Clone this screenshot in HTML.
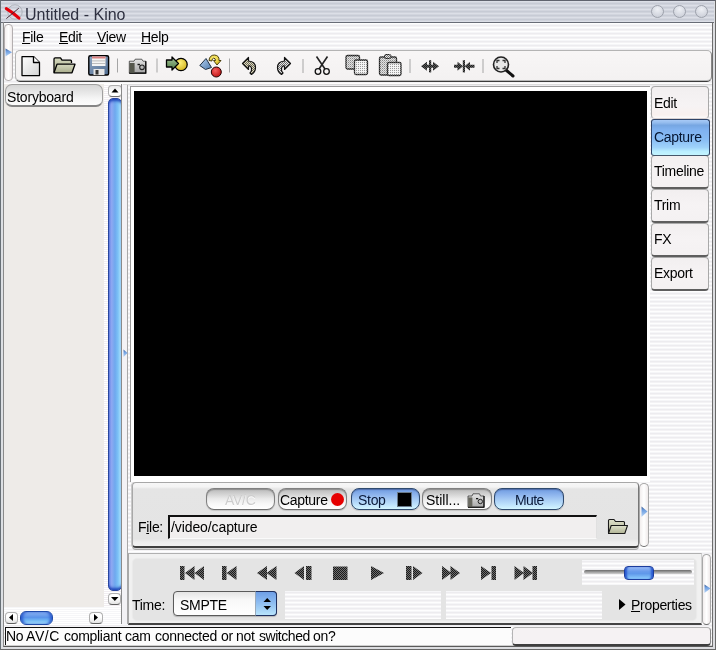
<!DOCTYPE html>
<html><head><meta charset="utf-8">
<style>
*{box-sizing:border-box}
html,body{margin:0;padding:0}
.t,.tab span{will-change:transform}
body{width:716px;height:650px;position:relative;overflow:hidden;font-family:"Liberation Sans",sans-serif;color:#000;
background:repeating-linear-gradient(180deg,#f6f6f8 0px,#f6f6f8 1px,#edecef 1px,#edecef 2px,#f4f3f5 2px,#f4f3f5 3px,#fefefe 3px,#fefefe 4px);}
.a{position:absolute}
.t{position:absolute;white-space:pre;line-height:1;font-size:14px;letter-spacing:-0.3px}
.stripe{background:repeating-linear-gradient(180deg,#f6f6f8 0px,#f6f6f8 1px,#edecef 1px,#edecef 2px,#f4f3f5 2px,#f4f3f5 3px,#fefefe 3px,#fefefe 4px)}
.tab{position:absolute;left:651px;width:58px;height:34px;border:1px solid #a9a9a9;border-bottom:2px solid #5e5e5e;border-radius:4px 4px 4px 4px;background:linear-gradient(180deg,#f2eff0 0%,#f6f3f4 50%,#f4f1f2 100%)}
.tab span{position:absolute;left:3px;font-size:14px;letter-spacing:-0.3px;line-height:1;white-space:pre}
.pill{position:absolute;height:22px;border-radius:8px;border:1px solid #808080;border-bottom-color:#6e6e6e;background:linear-gradient(180deg,#b9b9b9 0%,#d2d2d2 25%,#ebebeb 50%,#f8f8f8 75%,#ffffff 100%);box-shadow:inset 0 1px 1px rgba(0,0,0,.25),0 1px 1px rgba(0,0,0,.15)}
.bpill{position:absolute;height:22px;border-radius:8px;border:1px solid #2f4a6e;background:linear-gradient(180deg,#6f9ae0 0%,#8fb6ee 30%,#a9cdf5 55%,#c0e4fc 80%,#d4f6ff 100%);box-shadow:inset 0 1px 1px rgba(0,0,40,.3),0 1px 1px rgba(0,0,0,.15)}
.u{text-decoration:underline;text-underline-offset:1px}
</style></head><body>
<!-- outer border -->
<div class="a" style="left:0;top:0;width:716px;height:650px;border-left:1px solid #687076;border-top:1px solid #60636e;border-right:1px solid #686868;border-bottom:1px solid #686868"></div>
<div class="a" style="left:713px;top:1px;width:2px;height:648px;background:#dcdde0"></div>
<div class="a" style="left:1px;top:647px;width:714px;height:2px;background:#dcdde0"></div>
<div class="a" style="left:1px;top:22px;width:2px;height:625px;background:#dcdfe3"></div>
<!-- title bar -->
<div class="a" style="left:1px;top:1px;width:713px;height:22px;background:repeating-linear-gradient(180deg,#dcdfe7 0px,#dcdfe7 1px,#d2d5de 1px,#d2d5de 2px,#c7cbd5 2px,#c7cbd5 3px,#d0d3dc 3px,#d0d3dc 4px);border-bottom:1px solid #686c76"></div>
<div class="t" style="left:25px;top:7px;font-size:16px;letter-spacing:0;color:#2e3040">Untitled - Kino</div>
<svg class="a" style="left:0;top:0" width="28" height="24"><circle cx="15" cy="12" r="7.2" fill="none" stroke="#aeb2ba" stroke-width="1"/><path d="M6.3 8.6 Q12.5 12.2 19 18.2" stroke="#e4000a" stroke-width="3" stroke-linecap="round" fill="none"/><path d="M18.8 8.2 L6.3 18.6" stroke="#40202c" stroke-width="0.9"/></svg>
<!-- title buttons -->
<div class="a" style="left:651px;top:5px;width:13px;height:13px;border-radius:50%;border:1px solid #9da1ab;background:radial-gradient(circle at 50% 30%,#eef0f5,#c5c9d3)"></div>
<div class="a" style="left:673px;top:5px;width:13px;height:13px;border-radius:50%;border:1px solid #9da1ab;background:radial-gradient(circle at 50% 30%,#eef0f5,#c5c9d3)"></div>
<div class="a" style="left:695px;top:5px;width:13px;height:13px;border-radius:50%;border:1px solid #9da1ab;background:radial-gradient(circle at 50% 30%,#eef0f5,#c5c9d3)"></div>

<!-- inner frame line -->
<div class="a" style="left:3px;top:22px;width:710px;height:625px;border-left:1px solid #8a8a8a;border-right:1px solid #6e6e6e;border-bottom:1px solid #5a5a5a"></div>
<div class="a" style="left:4px;top:645px;width:708px;height:1px;background:#cfcfcf"></div>

<!-- handle box -->
<div class="a" style="left:4px;top:24px;width:9px;height:57px;border:1px solid #b4afb0;border-radius:4px;background:linear-gradient(90deg,#f4f0f0,#ffffff 50%,#efeaea)"></div>
<svg class="a" style="left:5px;top:48px" width="8" height="9.5"><defs><linearGradient id="tg5" x1="0" y1="0" x2="0" y2="1"><stop offset="0" stop-color="#3c5c90"/><stop offset=".35" stop-color="#6e9ee0"/><stop offset="1" stop-color="#b8d6f6"/></linearGradient></defs><path d="M0.5 0.5 L7 4.25 L0.5 8.5 Z" fill="url(#tg5)"/></svg>

<!-- menubar -->
<div class="t" style="left:22px;top:30px"><span class="u">F</span>ile</div>
<div class="t" style="left:59px;top:30px"><span class="u">E</span>dit</div>
<div class="t" style="left:97px;top:30px"><span class="u">V</span>iew</div>
<div class="t" style="left:141px;top:30px"><span class="u">H</span>elp</div>

<!-- toolbar -->
<div class="a" style="left:15px;top:50px;width:697px;height:32px;border:1px solid #b4b4b4;border-bottom:1px solid #3c3c3c;border-right-color:#888;border-radius:5px;background:linear-gradient(180deg,#f8f6f6,#f3f1f1);box-shadow:inset 0 -1px 0 #b8b8b8"></div>


<!-- toolbar icons -->
<svg class="a" style="left:0;top:0" width="716" height="90">
<defs>
<linearGradient id="docg" x1="0" y1="0" x2="1" y2="1"><stop offset="0" stop-color="#ffffff"/><stop offset="1" stop-color="#d4d4d4"/></linearGradient>
<linearGradient id="fold" x1="0" y1="0" x2="0" y2="1"><stop offset="0" stop-color="#d6d9bf"/><stop offset="1" stop-color="#a9ad8c"/></linearGradient>
<linearGradient id="flop" x1="0" y1="0" x2="1" y2="1"><stop offset="0" stop-color="#8fa6c2"/><stop offset="1" stop-color="#4f6b90"/></linearGradient>
<linearGradient id="cam" x1="0" y1="0" x2="0" y2="1"><stop offset="0" stop-color="#e4e4e4"/><stop offset="1" stop-color="#a4a4a4"/></linearGradient>
<linearGradient id="grn" x1="0" y1="0" x2="0" y2="1"><stop offset="0" stop-color="#a6c79a"/><stop offset="1" stop-color="#4f7a45"/></linearGradient>
<radialGradient id="yel" cx="0.4" cy="0.35" r="0.7"><stop offset="0" stop-color="#fff27a"/><stop offset="1" stop-color="#d2b21c"/></radialGradient>
<radialGradient id="red" cx="0.4" cy="0.35" r="0.7"><stop offset="0" stop-color="#f46060"/><stop offset="1" stop-color="#c01010"/></radialGradient>
<linearGradient id="pyr" x1="0" y1="0" x2="1" y2="1"><stop offset="0" stop-color="#b5d0ee"/><stop offset="1" stop-color="#4f7cb0"/></linearGradient>
<pattern id="dith" width="2" height="2" patternUnits="userSpaceOnUse"><rect width="2" height="2" fill="#dcd8c4"/><rect width="1" height="1" fill="#6e6a52"/><rect x="1" y="1" width="1" height="1" fill="#6e6a52"/></pattern>
<pattern id="dithg" width="2" height="2" patternUnits="userSpaceOnUse"><rect width="2" height="2" fill="#e6e6e6"/><rect width="1" height="1" fill="#6c6c6c"/><rect x="1" y="1" width="1" height="1" fill="#6c6c6c"/></pattern>
<pattern id="dithd" width="2" height="2" patternUnits="userSpaceOnUse"><rect width="2" height="2" fill="#5a5a5a"/><rect width="1" height="1" fill="#1e1e1e"/><rect x="1" y="1" width="1" height="1" fill="#1e1e1e"/></pattern>
<pattern id="dl1" width="2" height="2" patternUnits="userSpaceOnUse"><rect width="2" height="2" fill="#e2e2e2"/><rect width="1" height="1" fill="#8a8a8a"/><rect x="1" y="1" width="1" height="1" fill="#b4b4b4"/></pattern>
<pattern id="dl2" width="2" height="2" patternUnits="userSpaceOnUse"><rect width="2" height="2" fill="#f4f4f4"/><rect width="1" height="1" fill="#9a9a9a"/></pattern>
</defs>
<!-- new doc -->
<path d="M22 56.5 H33.5 L39.5 62.5 V75.5 H22 Z" fill="url(#docg)" stroke="#000" stroke-width="1.25" stroke-linejoin="round"/>
<path d="M33.5 56.5 V62.5 H39.5" fill="#fff" stroke="#000" stroke-width="1.3" stroke-linejoin="round"/>
<!-- folder -->
<path d="M54 72.5 V59 Q54 57.8 55.2 57.8 H60.5 L62 60.2 H70.5 Q71.5 60.2 71.5 61.2 V63" fill="url(#fold)" stroke="#000" stroke-width="1.3" stroke-linejoin="round"/>
<path d="M54 72.8 L57 64.2 H75 L72 72.8 Z" fill="url(#fold)" stroke="#000" stroke-width="1.3" stroke-linejoin="round"/>
<!-- floppy -->
<rect x="88.8" y="55.8" width="19.8" height="19.2" rx="1.5" fill="url(#flop)" stroke="#000" stroke-width="1.4"/>
<rect x="92" y="56.5" width="13.5" height="9.5" fill="#f4f4f4"/>
<rect x="92" y="56.5" width="13.5" height="2" fill="#d98080"/>
<rect x="92" y="60.5" width="13.5" height="0.8" fill="#b0b0b0"/>
<rect x="92" y="63" width="13.5" height="0.8" fill="#b0b0b0"/>
<rect x="93.5" y="69" width="11" height="6" fill="#e6e6e6"/>
<rect x="95.5" y="70" width="3" height="4.5" fill="#333"/>
<!-- sep -->
<rect x="117" y="58.5" width="1" height="14" fill="#a5a5a5"/>
<!-- camera -->
<path d="M129.3 61.2 H134 L135.2 59.2 H141.8 L143 61.2 H145.8 V73.2 H129.3 Z" fill="url(#cam)" stroke="#222" stroke-width="0.7"/>
<path d="M145.8 61.2 V73.2 H129.3" fill="none" stroke="#000" stroke-width="1.2"/>
<rect x="129.6" y="63" width="5" height="9.8" fill="#55574c"/>
<circle cx="142" cy="67.3" r="2.3" fill="#b8b8b8" stroke="#222" stroke-width="1.1"/>
<rect x="137.5" y="63.8" width="2.4" height="1.4" fill="#111"/>
<!-- sep -->
<rect x="156.5" y="58.5" width="1" height="14" fill="#a5a5a5"/>
<!-- arrow circle -->
<circle cx="181" cy="64.5" r="6.2" fill="url(#yel)" stroke="#000" stroke-width="1.3"/>
<path d="M166.5 60 H172 V57 L178.5 63.5 L172 70 V67 H166.5 Z" fill="url(#grn)" stroke="#000" stroke-width="1.3" stroke-linejoin="round"/>
<!-- shapes -->
<path d="M206 58.5 L211.5 67.5 L205.5 69.5 L199.8 65.5 Z" fill="url(#pyr)" stroke="#1e2e40" stroke-width="1"/>
<path d="M209 60.5 Q209.5 55 214.5 55 Q219.5 55.5 219 60.5 L221 60.5 L217 65 L213.5 60.5 L215.5 60.5 Q215.5 58 213.5 58.2 Q211.8 58.5 212 61 Z" fill="url(#yel)" stroke="#3a3000" stroke-width="0.9" stroke-linejoin="round"/>
<circle cx="216.3" cy="72" r="5" fill="url(#red)" stroke="#200" stroke-width="1"/>
<!-- sep -->
<rect x="229" y="58.5" width="1" height="14" fill="#a5a5a5"/>
<!-- undo -->
<path d="M242.5 63.5 L248.5 57.5 V61 Q255.5 61.5 255.5 67.5 Q255.5 72 251.5 74.5 L250 73 Q252 71 251.5 68.5 Q251 65.5 248.5 66 V69.5 Z" fill="url(#dith)" stroke="#111" stroke-width="1.2" stroke-linejoin="round"/>
<!-- redo -->
<path d="M290.5 63.5 L284.5 57.5 V61 Q277.5 61.5 277.5 67.5 Q277.5 72 281.5 74.5 L283 73 Q281 71 281.5 68.5 Q282 65.5 284.5 66 V69.5 Z" fill="url(#dithg)" stroke="#111" stroke-width="1.2" stroke-linejoin="round"/>
<!-- sep -->
<rect x="302.5" y="59" width="1" height="14" fill="#a5a5a5"/>
<!-- scissors -->
<path d="M316.5 56.5 L325 69 M327.5 56.5 L319 69" stroke="#222" stroke-width="1.6" fill="none"/>
<circle cx="318" cy="71.5" r="2.8" fill="none" stroke="#111" stroke-width="1.3"/>
<circle cx="326.5" cy="71.5" r="2.8" fill="none" stroke="#111" stroke-width="1.3"/>
<!-- copy -->
<rect x="346" y="55.5" width="13.5" height="13.5" rx="1.5" fill="url(#dl1)" stroke="url(#dithd)" stroke-width="1.3"/>
<rect x="354.5" y="60" width="13" height="14.5" rx="1.5" fill="url(#dl2)" stroke="url(#dithd)" stroke-width="1.3"/>
<!-- paste -->
<rect x="379.5" y="57" width="17" height="18" rx="1.5" fill="url(#dl1)" stroke="url(#dithd)" stroke-width="1.3"/>
<rect x="384.5" y="54.5" width="6.5" height="4" rx="1.5" fill="url(#dithg)" stroke="url(#dithd)" stroke-width="1"/>
<rect x="387.5" y="62.5" width="13.5" height="13" rx="1.5" fill="url(#dl2)" stroke="url(#dithd)" stroke-width="1.3"/>
<!-- sep -->
<rect x="409.5" y="59" width="1" height="14" fill="#a5a5a5"/>
<!-- expand -->
<g fill="url(#dithd)">
<path d="M421 66.3 L427 61.8 V64.8 H433 V61.8 L439 66.3 L433 70.8 V67.8 H427 V70.8 Z"/>
<rect x="429" y="60.2" width="2.2" height="12.2"/>
</g>
<!-- contract -->
<g fill="url(#dithd)">
<path d="M454 64.8 H457.5 V61.8 L463 66.3 L457.5 70.8 V67.8 H454 Z"/>
<path d="M474.5 64.8 H470 V61.8 L464.5 66.3 L470 70.8 V67.8 H474.5 Z"/>
<rect x="462.8" y="60.2" width="2.2" height="12.2"/>
</g>
<!-- sep -->
<rect x="482.5" y="59" width="1" height="14" fill="#a5a5a5"/>
<!-- magnifier -->
<path d="M506 70 L513 76" stroke="#111" stroke-width="3" stroke-linecap="round"/>
<circle cx="501" cy="64.5" r="7.5" fill="#e8e8e8" stroke="#222" stroke-width="1.6"/>
<path d="M497 63 V60.5 H499.5 M502.5 60.5 H505 V63 M505 66 V68.5 H502.5 M499.5 68.5 H497 V66" stroke="#333" stroke-width="1.3" fill="none"/>
</svg>

<!-- toolbar bottom line -->
<div class="a" style="left:4px;top:81px;width:709px;height:2px;background:#5e5e5e;opacity:0"></div>

<!-- left list -->
<div class="a" style="left:4px;top:84px;width:100px;height:523px;background:#eeebe8"></div>
<div class="a" style="left:5px;top:84px;width:98px;height:23px;border-radius:7px;border:1px solid #a0a0a0;border-bottom:2px solid #858585;background:linear-gradient(180deg,#d6d6d6 0%,#e6e6e6 35%,#f6f6f6 70%,#fcfcfc 100%)"></div>
<div class="t" style="left:7px;top:90px;letter-spacing:-0.2px">Storyboard</div>

<!-- v scrollbar -->
<div class="a" style="left:104px;top:84px;width:17px;height:523px;background:repeating-linear-gradient(180deg,#ffffff 0,#ffffff 1px,#f1edf1 1px,#f1edf1 2px)"></div>
<div class="a" style="left:108px;top:85px;width:14px;height:12px;border:1px solid #b0b0b0;border-bottom-color:#707070;border-radius:4px;background:linear-gradient(180deg,#e8e8e8,#fff 60%)"></div>
<svg class="a" style="left:108px;top:85px" width="14" height="12"><path d="M3.5 7.5 L7 3.5 L10.5 7.5 Z" fill="#000"/></svg>
<div class="a" style="left:108px;top:98px;width:14px;height:493px;border:1px solid #2846a0;border-radius:5px;background:linear-gradient(90deg,#6a84e4 0%,#8ea8f2 22%,#6ea8ee 50%,#7cc2f6 75%,#aee2fc 100%);box-shadow:inset 0 4px 3px -2px #1e44b8,inset 0 -4px 3px -2px #1e44b8"></div>
<div class="a" style="left:108px;top:593px;width:13px;height:12px;border:1px solid #b0b0b0;border-bottom-color:#606060;border-radius:4px;background:linear-gradient(180deg,#fff 40%,#e4e4e4)"></div>
<svg class="a" style="left:108px;top:593px" width="14" height="12"><path d="M3 4 L6.8 8 L10.5 4 Z" fill="#000"/></svg>

<!-- h scrollbar -->
<div class="a" style="left:4px;top:607px;width:117px;height:18px;background:repeating-linear-gradient(180deg,#f6f6f8 0,#f6f6f8 1px,#ffffff 1px,#ffffff 2px)"></div>
<div class="a" style="left:5px;top:612px;width:13px;height:12px;border:1px solid #b0b0b0;border-bottom-color:#606060;border-radius:4px;background:linear-gradient(180deg,#fff 40%,#e4e4e4)"></div>
<svg class="a" style="left:5px;top:612px" width="13" height="12"><path d="M8 2 L4 5.5 L8 9 Z" fill="#000"/></svg>
<div class="a" style="left:20px;top:611px;width:33px;height:14px;border:1px solid #1f4aa8;border-radius:6px;background:linear-gradient(180deg,#8ab0f0 0%,#5a94ea 45%,#72b8f4 70%,#a8e0fc 100%);box-shadow:inset 3px 0 3px -1px #2a5ad0,inset -3px 0 3px -1px #2a5ad0"></div>
<div class="a" style="left:89px;top:612px;width:14px;height:12px;border:1px solid #b0b0b0;border-bottom-color:#606060;border-radius:4px;background:linear-gradient(180deg,#fff 40%,#e4e4e4)"></div>
<svg class="a" style="left:89px;top:612px" width="14" height="12"><path d="M5 2 L9 5.5 L5 9 Z" fill="#000"/></svg>

<!-- divider -->
<div class="a" style="left:121px;top:84px;width:1px;height:540px;background:#8a8a8a"></div>
<div class="a" style="left:122px;top:84px;width:5px;height:540px;background:#f3f2f5"></div>
<div class="a" style="left:127px;top:84px;width:1px;height:540px;background:#a8a8a8"></div>
<svg class="a" style="left:123px;top:349px" width="5.5" height="9"><defs><linearGradient id="tg123" x1="0" y1="0" x2="0" y2="1"><stop offset="0" stop-color="#3c5c90"/><stop offset=".35" stop-color="#6e9ee0"/><stop offset="1" stop-color="#b8d6f6"/></linearGradient></defs><path d="M0.5 0.5 L4.5 4.0 L0.5 8 Z" fill="url(#tg123)"/></svg>

<!-- right pane top line -->
<div class="a" style="left:123px;top:84px;width:589px;height:1px;background:#dcdcdc"></div>

<!-- video frame -->
<div class="a" style="left:130px;top:86px;width:520px;height:396px;border-left:1px solid #9a9a9a;border-top:1px solid #9a9a9a;background:#fff"></div>
<div class="a" style="left:134px;top:91px;width:513px;height:385px;background:#000"></div>

<!-- tabs -->
<div class="tab" style="top:86px;height:33px;border-bottom:1px solid #d8d0d0;background:linear-gradient(180deg,#f2eff0 0%,#f6f3f4 60%,#f8f0ee 90%,#fbfbfb 100%)"></div>
<div class="tab" style="top:155px"></div>
<div class="tab" style="top:189px"></div>
<div class="tab" style="top:223px"></div>
<div class="tab" style="top:257px"></div>
<div class="t" style="left:654px;top:96px">Edit</div>
<div class="t" style="left:654px;top:164px">Timeline</div>
<div class="t" style="left:654px;top:198px">Trim</div>
<div class="t" style="left:654px;top:232px">FX</div>
<div class="t" style="left:654px;top:266px">Export</div>
<div class="a" style="left:651px;top:119px;width:59px;height:37px;border:1px solid #2d4266;border-bottom-color:#46566a;border-radius:3px;background:linear-gradient(180deg,#a8caf6 0%,#94bcee 8%,#76a6e2 15%,#80b2f0 28%,#88bcf4 55%,#9ed2fa 78%,#baeeff 90%,#c2f4ff 100%)"></div>
<div class="t" style="left:654px;top:130px;color:#061632">Capture</div>

<!-- capture frame -->
<div class="a" style="left:132px;top:482px;width:507px;height:66px;border:1px solid #a8a8a8;border-bottom:2px solid #404040;border-right-color:#777;border-radius:4px;background:linear-gradient(180deg,#f7f7f7 0px,#f4f4f4 4px,#e5e5e5 6px,#e4e4e4 56px,#eeeeee 59px,#f2f2f2 100%);box-shadow:0 1px 0 #d8d8d8,0 2px 0 #a8a8a8,-1px 0 0 #c8c8c8"></div>
<div class="a" style="left:639px;top:483px;width:10px;height:64px;border:1px solid #a8a8a8;border-bottom-color:#6a6a6a;border-radius:5px;background:linear-gradient(90deg,#f2eeee,#fff 50%,#efeaea)"></div>
<svg class="a" style="left:641px;top:506px" width="7.5" height="12"><defs><linearGradient id="tg641" x1="0" y1="0" x2="0" y2="1"><stop offset="0" stop-color="#3c5c90"/><stop offset=".35" stop-color="#6e9ee0"/><stop offset="1" stop-color="#b8d6f6"/></linearGradient></defs><path d="M0.5 0.5 L6.5 5.5 L0.5 11 Z" fill="url(#tg641)"/></svg>

<div class="pill" style="left:206px;top:488px;width:69px"></div>
<div class="t" style="left:225px;top:493px;color:#cdcdcd;text-shadow:0 1px 0 #fff">AV/C</div>
<div class="pill" style="left:278px;top:488px;width:69px"></div>
<div class="t" style="left:280px;top:493px">Capture</div>
<div class="a" style="left:331px;top:493px;width:13px;height:13px;border-radius:50%;background:#e60000"></div>
<div class="bpill" style="left:351px;top:488px;width:69px"></div>
<div class="t" style="left:358px;top:493px;color:#0a1a3a">Stop</div>
<div class="a" style="left:397px;top:492px;width:15px;height:15px;background:#000;border:1px solid #6a7a8a"></div>
<div class="pill" style="left:422px;top:488px;width:70px"></div>
<div class="t" style="left:425.5px;top:493px;letter-spacing:0">Still...</div>
<div class="bpill" style="left:494px;top:488px;width:70px"></div>
<div class="t" style="left:515px;top:493px;letter-spacing:-0.6px;color:#0a1a3a">Mute</div>

<div class="t" style="left:137.5px;top:520px">F<span class="u">i</span>le:</div>
<div class="a" style="left:168px;top:515px;width:429px;height:24px;border-top:2px solid #111;border-left:2px solid #111;background:#f1efef;border-right:1px solid #e0e0e0;border-bottom:1px solid #fafafa"></div>
<div class="t" style="left:171px;top:520px;letter-spacing:-0.1px">/video/capture</div>

<!-- transport frame -->
<div class="a" style="left:128px;top:553px;width:574px;height:72px;border-top:1px solid #b0b0b0;border-left:1px solid #a8a8a8;border-bottom:2px solid #444;border-right:1px solid #d0d0d0;background:#f1f1f1"></div>
<div class="a" style="left:133px;top:559px;width:563px;height:61px;border-radius:4px;background:#e4e4e4;box-shadow:0 0 1px 1px #e9e9e9"></div>
<div class="a" style="left:702px;top:554px;width:9px;height:71px;border:1px solid #a8a8a8;border-bottom-color:#6a6a6a;border-radius:5px;background:linear-gradient(90deg,#f2eeee,#fff 50%,#efeaea)"></div>
<svg class="a" style="left:704px;top:584px" width="7.5" height="10"><defs><linearGradient id="tg704" x1="0" y1="0" x2="0" y2="1"><stop offset="0" stop-color="#3c5c90"/><stop offset=".35" stop-color="#6e9ee0"/><stop offset="1" stop-color="#b8d6f6"/></linearGradient></defs><path d="M0.5 0.5 L6.5 4.5 L0.5 9 Z" fill="url(#tg704)"/></svg>

<div class="t" style="left:131.5px;top:598px">Time:</div>
<div class="a" style="left:173px;top:591px;width:104px;height:25px;border:1px solid #5a5a5a;border-radius:4px;background:linear-gradient(180deg,#e4e4e4,#f8f8f8 35%,#fff);box-shadow:0 1px 1px rgba(0,0,0,.2)"></div>
<div class="a" style="left:255px;top:591px;width:22px;height:25px;border:1px solid #1f3160;border-left:1px solid #9ab;border-radius:0 4px 4px 0;background:linear-gradient(180deg,#6f9fe6 0%,#82b2ee 30%,#9ccaf4 65%,#b8e4fc 100%)"></div>
<svg class="a" style="left:256px;top:591px" width="21" height="25"><path d="M7.5 11 L11.2 7 L15 11 Z M7.5 15 L11.2 19 L15 15 Z" fill="#000"/></svg>
<div class="t" style="left:179.5px;top:598px">SMPTE</div>

<div class="a stripe" style="left:285px;top:591px;width:156px;height:28px"></div>
<div class="a stripe" style="left:446px;top:591px;width:156px;height:28px"></div>
<div class="a stripe" style="left:582px;top:560px;width:112px;height:25px"></div>
<div class="a" style="left:584px;top:570px;width:108px;height:4px;border-radius:2px;background:linear-gradient(180deg,#6a6a6a,#a8a8a8 60%,#d0d0d0)"></div>
<div class="a" style="left:624px;top:566px;width:30px;height:14px;border:1px solid #1c3c9c;border-radius:4px;background:linear-gradient(180deg,#9cbcf6 0%,#6a9cec 35%,#5f98ea 55%,#8ccdfc 100%);box-shadow:inset 3px 0 2px -1px #2a5ad0,inset -3px 0 2px -1px #2a5ad0"></div>

<svg class="a" style="left:619px;top:599px" width="8" height="12"><path d="M0 0 L6.5 5.5 L0 11 Z" fill="#000"/></svg>
<div class="t" style="left:630.5px;top:598px"><span class="u">P</span>roperties</div>


<!-- transport icons -->
<svg class="a" style="left:0;top:480px" width="716" height="120">
<defs>
<pattern id="dk" width="2" height="2" patternUnits="userSpaceOnUse"><rect width="2" height="2" fill="#6e6e6e"/><rect width="1" height="1" fill="#1a1a1a"/><rect x="1" y="1" width="1" height="1" fill="#1a1a1a"/></pattern>
<linearGradient id="fold2" x1="0" y1="0" x2="0" y2="1"><stop offset="0" stop-color="#e0e2cc"/><stop offset="1" stop-color="#b0b394"/></linearGradient>
<linearGradient id="cam2" x1="0" y1="0" x2="0" y2="1"><stop offset="0" stop-color="#e6e6e6"/><stop offset="1" stop-color="#a8a8a8"/></linearGradient>
</defs>
<g fill="url(#dk)">
<!-- first -->
<rect x="180" y="86" width="4.5" height="14"/>
<path d="M185 93 L194.5 86 V100 Z M194.5 93 L204 86 V100 Z"/>
<!-- prev -->
<rect x="222" y="86" width="4.5" height="14"/>
<path d="M226.5 93 L236.5 86 V100 Z"/>
<!-- rew -->
<path d="M257 93 L267 86 V100 Z M266.5 93 L276.5 86 V100 Z"/>
<!-- back frame -->
<path d="M294.5 93 L304 86 V100 Z"/>
<rect x="306" y="86" width="5.5" height="14"/>
<!-- stop -->
<rect x="333" y="86.5" width="14.5" height="13.5"/>
<!-- play -->
<path d="M371 86 L384 93 L371 100 Z"/>
<!-- fwd frame -->
<rect x="406" y="86" width="5.5" height="14"/>
<path d="M413 86 L422.5 93 L413 100 Z"/>
<!-- ffwd -->
<path d="M442 86 L451.5 93 L442 100 Z M450.5 86 L460 93 L450.5 100 Z"/>
<!-- next -->
<path d="M481 86 L491 93 L481 100 Z"/>
<rect x="491.5" y="86" width="4.5" height="14"/>
<!-- last -->
<path d="M514.5 86 L524 93 L514.5 100 Z M523.5 86 L533 93 L523.5 100 Z"/>
<rect x="532.5" y="86" width="4.5" height="14"/>
</g>
<!-- still camera -->
<path d="M468 16 H472 L473 13.8 H479.5 L480.5 16 H484 V27.2 H468 Z" fill="url(#cam2)" stroke="#222" stroke-width="0.7"/>
<path d="M484 16 V27.2 H468" fill="none" stroke="#000" stroke-width="1.1"/>
<rect x="468.3" y="17.5" width="4" height="9.5" fill="#5a5a52"/>
<path d="M468.3 19 H472.3 M468.3 21 H472.3 M468.3 23 H472.3 M468.3 25 H472.3" stroke="#8a8a80" stroke-width="0.6"/>
<circle cx="480.3" cy="21.5" r="2.2" fill="#b8b8b8" stroke="#222" stroke-width="1"/>
<rect x="476" y="18" width="2.2" height="1.3" fill="#111"/>
<!-- entry folder -->
<path d="M608.5 53 V40.5 Q608.5 39.5 609.5 39.5 H614 L615.5 41.5 H623.5 Q624.5 41.5 624.5 42.5 V45" fill="url(#fold2)" stroke="#1a1a1a" stroke-width="1.1" stroke-linejoin="round"/>
<path d="M608.5 53.5 L611.2 45.5 H627.5 L624.8 53.5 Z" fill="url(#fold2)" stroke="#1a1a1a" stroke-width="1.1" stroke-linejoin="round"/>
</svg>

<!-- status bar -->
<div class="a" style="left:5px;top:627px;width:506px;height:18px;border-top:1px solid #111;border-left:1px solid #111;background:#fcfcfc"></div>
<div class="t" style="left:6px;top:629px">No</div><div class="t" style="left:26px;top:629px;letter-spacing:0.6px">AV/C</div><div class="t" style="left:63.5px;top:629px">compliant</div><div class="t" style="left:125px;top:629px">cam</div><div class="t" style="left:155px;top:629px">connected</div><div class="t" style="left:220.5px;top:629px">or</div><div class="t" style="left:236px;top:629px">not</div><div class="t" style="left:258.5px;top:629px;letter-spacing:-0.45px">switched</div><div class="t" style="left:313px;top:629px">on?</div>
<div class="a" style="left:512px;top:627px;width:199px;height:19px;border:1px solid #b4b4b4;border-bottom:2px solid #3e3e3e;border-right:1px solid #8a8a8a;border-radius:4px;background:#f5f2f3"></div>

</body></html>
